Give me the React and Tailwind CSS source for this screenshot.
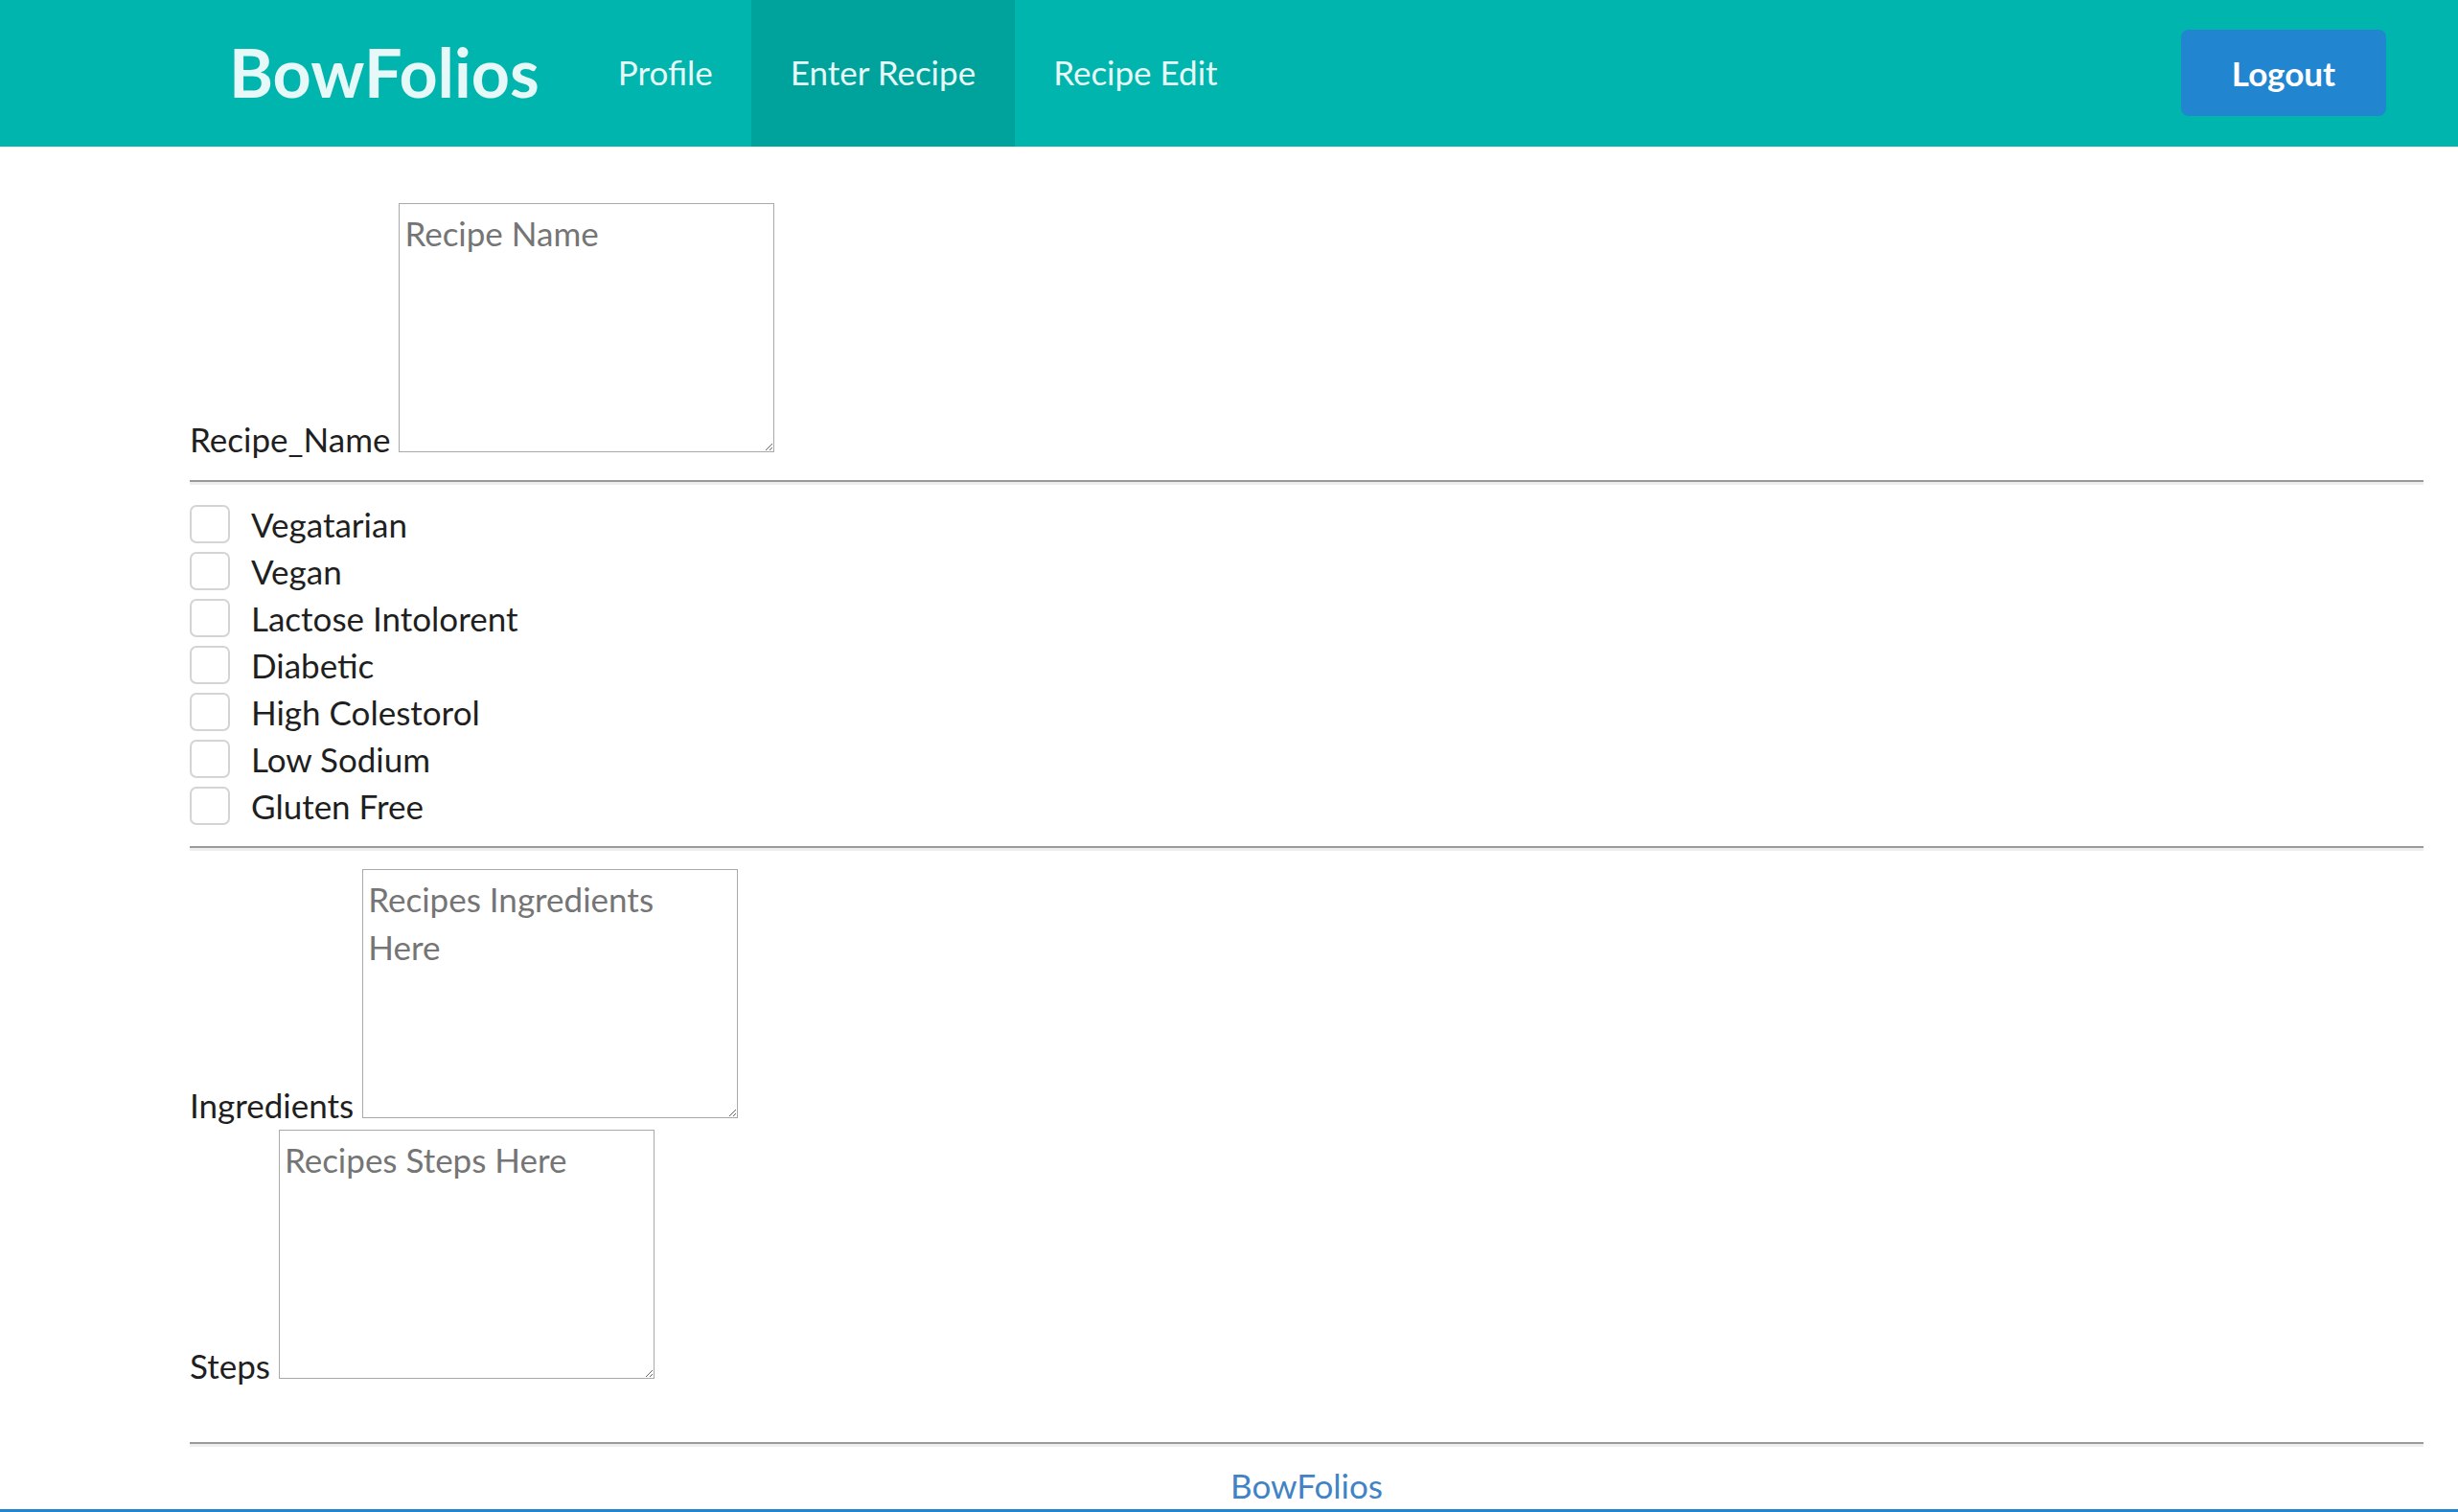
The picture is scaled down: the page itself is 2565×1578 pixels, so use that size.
const diets = [
  "Vegatarian",
  "Vegan",
  "Lactose Intolorent",
  "Diabetic",
  "High Colestorol",
  "Low Sodium",
  "Gluten Free",
];

const Divider = ({ className = "" }) => (
  <div
    className={`border-t-[2px] border-b-[3px] border-t-[#9a9a9a] border-b-[#eeeeee] ${className}`}
  />
);

const Box = ({ placeholder }) => (
  <textarea
    placeholder={placeholder}
    className="inline-block h-[260px] w-[392px] border border-[#a9a9a9] bg-white p-[5px] align-baseline placeholder:text-[#757575]"
  />
);

const App = () => {
  return (
    <div
      className="h-screen overflow-hidden bg-white text-[35px] leading-[50px] text-[#1f1f1f]"
      style={{ fontFamily: "Lato, 'Open Sans', sans-serif" }}
    >
      {/* Navbar */}
      <div className="flex h-[153px] items-stretch bg-[#00b5ad] leading-[48px] text-[#e6f8f7]">
        <div className="ml-[199px] flex items-center pb-[3px] pl-[40px] pr-[42px] text-[70px] font-bold">
          BowFolios
        </div>
        <div className="flex items-center px-[40px] pb-[3px]">Profile</div>
        <div className="flex items-center bg-[#00a39c] px-[41px] pb-[3px]">
          Enter Recipe
        </div>
        <div className="flex items-center px-[40px] pb-[3px]">Recipe Edit</div>
        <div className="ml-auto mr-[75px] flex items-center pb-[2px]">
          <button className="h-[90px] w-[214px] rounded-[8px] bg-[#2185d0] font-bold text-white">
            Logout
          </button>
        </div>
      </div>

      {/* Form */}
      <div className="ml-[198px] mr-[36px]">
        <div className="mt-[59px]">
          <label>Recipe_Name</label> <Box placeholder="Recipe Name" />
        </div>

        <Divider className="mt-[18px]" />

        <div className="mt-[16px]">
          {diets.map((d) => (
            <label key={d} className="flex h-[49px] items-center">
              <span className="h-[40px] w-[42px] shrink-0 rounded-[7px] border-2 border-[#d4d4d5] bg-white" />
              <span className="ml-[22px]">{d}</span>
            </label>
          ))}
        </div>

        <Divider className="mt-[18px]" />

        <div className="mt-[19px]">
          <label>Ingredients</label>{" "}
          <Box placeholder="Recipes Ingredients Here" />
        </div>
        <div className="mt-[1px]">
          <label>Steps</label> <Box placeholder="Recipes Steps Here" />
        </div>

        <Divider className="mt-[55px]" />

        <div className="mt-[15px] text-center text-[#4183c4]">BowFolios</div>
      </div>
      <div className="h-[3px] bg-[#2185d0]" />
    </div>
  );
};

export default App;
